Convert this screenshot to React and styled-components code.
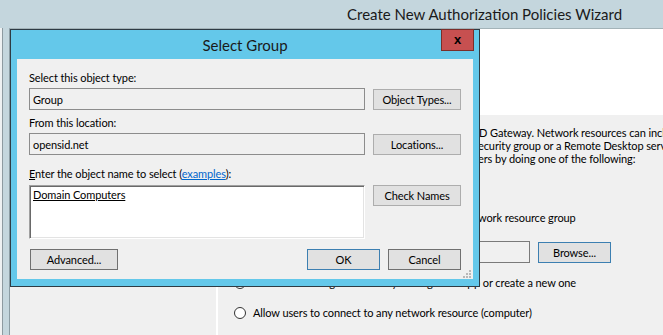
import React from "react";
import styled, { createGlobalStyle } from "styled-components";

const GlobalStyle = createGlobalStyle`
  html, body {
    margin: 0;
    padding: 0;
    background: #c4d6dd;
  }
  body {
    width: 663px;
    height: 335px;
    overflow: hidden;
    font-family: Lato, "Liberation Sans", sans-serif;
    font-size: 11px;
    letter-spacing: -0.1px;
    color: #000;
  }
`;

// text of the wizard page that runs under the Select Group dialog
const lines = [
  ["Select the network resources that users can connect to through R", "D Gateway. Network resources can include"],
  ["computers in an Active Directory group, such as a s", "ecurity group or a Remote Desktop server farm."],
  ["You can specify the network resources or the comput", "ers by doing one of the following:"],
];

const App = () => {
  return (
    <>
      <GlobalStyle />
      <Screen>
        <TitleBar>Create New Authorization Policies Wizard</TitleBar>
        <Frame>
          <LeftEdge />
          <Client>
            <Header />
            <Body>
              <SidePane />
              <MainPane>
                <Para>
                  {lines.map(([under, shown], i) => (
                    <Line key={i}>
                      <Covered $w={243 + (i === 0 ? 1 : 0)}>{under}</Covered>
                      {shown}
                    </Line>
                  ))}
                </Para>
                <RadioRow top={46}>
                  <Radio />
                  <span>
                    <Covered $w={225}>Select an Active Directory Domain Services net</Covered>
                    work resource group
                  </span>
                </RadioRow>
                <BrowseRow>
                  <PlainInput />
                  <Button $small $focused>Browse...</Button>
                </BrowseRow>
                <RadioRow top={13}>
                  <Radio />
                  <span>
                    <Covered $w={221}>Select an existing RD Gateway-managed computer grou</Covered>
                    p or create a new one
                  </span>
                </RadioRow>
                <RadioRow top={16}>
                  <Radio />
                  <span>Allow users to connect to any network resource (computer)</span>
                </RadioRow>
              </MainPane>
            </Body>
          </Client>
        </Frame>

        <Dialog>
          <DialogTitle>
            Select Group
            <CloseButton>x</CloseButton>
          </DialogTitle>
          <DialogContent>
            <Label top={12}>Select this object type:</Label>
            <FieldRow>
              <Field>Group</Field>
              <Button>Object Types...</Button>
            </FieldRow>
            <Label top={6}>From this location:</Label>
            <FieldRow>
              <Field>opensid.net</Field>
              <Button>Locations...</Button>
            </FieldRow>
            <Label top={12}>
              <u>E</u>nter the object name to select (<Link>examples</Link>):
            </Label>
            <FieldRow $top>
              <NameArea>
                <u>Domain Computers</u>
              </NameArea>
              <Button>Check Names</Button>
            </FieldRow>
            <ActionRow>
              <Button $outline>Advanced...</Button>
              <ActionGroup>
                <Button $small $focused>OK</Button>
                <Button $small $outline>Cancel</Button>
              </ActionGroup>
            </ActionRow>
            <Grip width="9" height="9" viewBox="0 0 9 9">
              <rect x="7" y="1" width="2" height="2" fill="#b8b8b8" />
              <rect x="4" y="4" width="2" height="2" fill="#b8b8b8" />
              <rect x="7" y="4" width="2" height="2" fill="#b8b8b8" />
              <rect x="1" y="7" width="2" height="2" fill="#b8b8b8" />
              <rect x="4" y="7" width="2" height="2" fill="#b8b8b8" />
              <rect x="7" y="7" width="2" height="2" fill="#b8b8b8" />
            </Grip>
          </DialogContent>
        </Dialog>
      </Screen>
    </>
  );
};

export default App;

const Screen = styled.div`
  position: relative;
  width: 663px;
  height: 335px;
  overflow: hidden;
  display: flex;
  flex-direction: column;
  background: #c4d6dd;
`;

const TitleBar = styled.div`
  height: 28px;
  display: flex;
  align-items: center;
  padding-left: 347px;
  font-size: 15px;
  letter-spacing: 0;
  color: #1a1a1a;
  white-space: nowrap;
`;

const Frame = styled.div`
  flex: 1;
  display: flex;
  min-height: 0;
`;

const LeftEdge = styled.div`
  width: 9px;
  background: linear-gradient(
    to right,
    #eef1f2 0,
    #eef1f2 2px,
    #8d9aa0 2px,
    #8d9aa0 3px,
    #c4d6dd 3px
  );
`;

const Client = styled.div`
  flex: 1;
  display: flex;
  flex-direction: column;
  border-left: 1px solid #8b9ca3;
  border-top: 1px solid #a3b3b8;
  background: #f0f0f0;
`;

const Header = styled.div`
  height: 86px;
  background: #fff;
`;

const Body = styled.div`
  flex: 1;
  display: grid;
  grid-template-columns: 208px 1fr;
`;

const SidePane = styled.div`
  background: #f0f0f0;
  border-right: 2px solid #fff;
`;

const MainPane = styled.div`
  display: flex;
  flex-direction: column;
  padding: 11px 0 0 17px;
  white-space: nowrap;
  overflow: hidden;
`;

const Para = styled.div`
  display: flex;
  flex-direction: column;
`;

const Line = styled.div`
  line-height: 13px;
  height: 13px;
`;

const Covered = styled.span`
  display: inline-block;
  width: ${(p) => p.$w}px;
  overflow: hidden;
  vertical-align: top;
`;

const RadioRow = styled.div`
  display: flex;
  align-items: center;
  gap: 7px;
  height: 14px;
  line-height: 14px;
  margin-top: ${(p) => p.top}px;
  margin-left: -1px;
`;

const Radio = styled.span`
  width: 10px;
  height: 10px;
  flex: none;
  border: 1px solid #333;
  border-radius: 50%;
  background: #fff;
`;

const BrowseRow = styled.div`
  display: flex;
  align-items: center;
  gap: 8px;
  margin: 16px 0 0 18px;
  height: 22px;
`;

const PlainInput = styled.div`
  width: 275px;
  height: 20px;
  border: 1px solid #7a7a7a;
  background: #f0f0f0;
`;

const Button = styled.div`
  box-sizing: border-box;
  width: ${(p) => (p.$small ? 73 : 88)}px;
  height: 21px;
  display: flex;
  align-items: center;
  justify-content: center;
  background: #e1e1e1;
  border: 1px solid #adadad;
  white-space: nowrap;
  flex: none;
  ${(p) => (p.$outline ? "border-color: #707070;" : "")}
  ${(p) => (p.$focused ? "border-color: #3c7fb1;" : "")}
`;

const Dialog = styled.div`
  position: absolute;
  left: 10px;
  top: 29px;
  width: 470px;
  height: 258px;
  box-sizing: border-box;
  border: 1px solid #2e3b44;
  background: #64c8ea;
  display: flex;
  flex-direction: column;
`;

const DialogTitle = styled.div`
  position: relative;
  height: 29px;
  display: flex;
  align-items: center;
  justify-content: center;
  font-size: 15px;
  letter-spacing: 0;
  color: #1a1a1a;
`;

const CloseButton = styled.div`
  position: absolute;
  top: -1px;
  right: 5px;
  width: 33px;
  height: 22px;
  box-sizing: border-box;
  background: #c75050;
  border: 1px solid #7a2e2a;
  display: flex;
  align-items: center;
  justify-content: center;
  font-family: "Liberation Sans", sans-serif;
  font-weight: 700;
  font-size: 13px;
  line-height: 1;
  padding-bottom: 2px;
  color: #000;
`;

const DialogContent = styled.div`
  position: relative;
  flex: 1;
  margin: 0 6px 7px 6px;
  background: #f0f0f0;
  padding: 0 12px;
  display: flex;
  flex-direction: column;
`;

const Label = styled.div`
  line-height: 14px;
  height: 14px;
  margin-top: ${(p) => p.top}px;
  margin-bottom: 3px;
  white-space: nowrap;
`;

const Link = styled.span`
  color: #0066cc;
  text-decoration: underline;
`;

const FieldRow = styled.div`
  display: flex;
  align-items: ${(p) => (p.$top ? "flex-start" : "center")};
  gap: 8px;
  ${(p) => (p.$top ? "margin-top: 1px;" : "")}
`;

const Field = styled.div`
  box-sizing: border-box;
  width: 336px;
  height: 22px;
  border: 1px solid #8c8c8c;
  background: #f0f0f0;
  padding-left: 3px;
  display: flex;
  align-items: center;
`;

const NameArea = styled.div`
  box-sizing: border-box;
  width: 336px;
  height: 54px;
  background: #fff;
  border: 1px solid;
  border-color: #a0a0a0 #fff #fff #a0a0a0;
  box-shadow: inset 1px 1px #696969, inset -1px -1px #e3e3e3;
  padding: 2px 0 0 3px;
  line-height: 14px;
`;

const ActionRow = styled.div`
  display: flex;
  justify-content: space-between;
  margin-top: 10px;
  padding-left: 1px;
`;

const ActionGroup = styled.div`
  display: flex;
  gap: 8px;
`;

const Grip = styled.svg`
  position: absolute;
  right: 2px;
  bottom: 1px;
`;
